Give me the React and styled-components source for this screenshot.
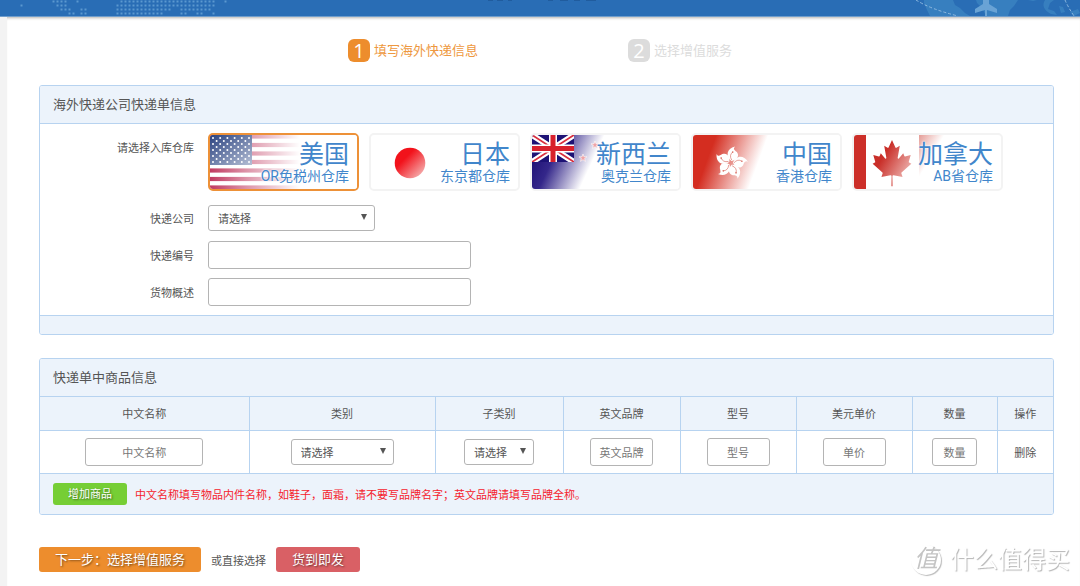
import React, { useState } from 'react';
import styled, { createGlobalStyle } from 'styled-components';

const GlobalStyle = createGlobalStyle`
  * {
    box-sizing: border-box;
  }
  body {
    margin: 0;
    background: #f3f3f3;
    color: #555;
    font-family: 'Noto Sans CJK SC', sans-serif;
    font-size: 11px;
  }
  input, select, button {
    font-family: inherit;
    font-size: inherit;
    color: inherit;
  }
`;

const headingFont = "'Liberation Sans', 'Noto Sans CJK SC', sans-serif";

// Styled Components
const Header = styled.header`
  position: relative;
  display: flex;
  justify-content: space-between;
  height: 17px;
  overflow: hidden;
  background: #296db5;
  border-bottom: 1px solid #6f9dcc;
`;

const Page = styled.div`
  position: relative;
  margin-left: 7px;
  padding: 22px 26px 14px 32px;
  min-height: calc(100vh - 17px);
  background: #fff;
  box-shadow: inset 0 3px 3px -2px rgba(80, 70, 60, 0.4);
`;

const Steps = styled.ol`
  display: flex;
  justify-content: center;
  gap: 150px;
  margin: 0 0 23px;
  padding: 0 13px 0 0;
  list-style: none;
`;

const Step = styled.li`
  display: flex;
  align-items: center;
  gap: 4px;
  font-family: ${headingFont};
  font-size: 13px;
  line-height: 23px;
  color: ${(props) => (props.$active ? '#ee9840' : '#dcdcdc')};
`;

const StepNumber = styled.span`
  width: 22px;
  height: 23px;
  border-radius: 6px;
  background: ${(props) => (props.$active ? '#ed8d2d' : '#dcdcdc')};
  color: #fff;
  font-family: 'Open Sans', sans-serif;
  font-size: 20px;
  line-height: 23px;
  text-align: center;
`;

const Panel = styled.section`
  margin-bottom: 23px;
  border: 1px solid #b7d3f0;
  border-radius: 3px;
  background: #fff;
  overflow: hidden;
`;

const PanelTitle = styled.h2`
  margin: 0;
  padding: 0 13px;
  border-bottom: 1px solid #b7d3f0;
  background: #ecf3fb;
  font-family: ${headingFont};
  font-size: 13px;
  font-weight: 400;
  line-height: 37px;
`;

const PanelFooter = styled.div`
  display: flex;
  align-items: center;
  gap: 8px;
  min-height: 19px;
  padding: ${(props) => (props.$roomy ? '9px 13px' : '0')};
  border-top: 1px solid #b7d3f0;
  background: #ecf3fb;
`;

const FormBody = styled.div`
  display: flex;
  flex-direction: column;
  gap: 9px;
  padding: 9px 0;
`;

const FormRow = styled.div`
  display: flex;
  align-items: ${(props) => (props.$top ? 'flex-start' : 'center')};
  gap: 14px;
  min-height: 28px;
  margin-bottom: ${(props) => (props.$top ? '4px' : '0')};
`;

const FormLabel = styled.label`
  flex: none;
  width: 154px;
  line-height: 28px;
  text-align: right;
`;

const TextInput = styled.input`
  width: ${(props) => props.$width || '100%'};
  max-width: 100%;
  height: 28px;
  padding: 0 2px;
  border: 1px solid #b4b4b4;
  border-radius: 3px;
  background: #fff;
  text-align: ${(props) => (props.$center ? 'center' : 'left')};
  &::placeholder {
    color: #777;
    opacity: 1;
  }
`;

const SelectWrap = styled.span`
  position: relative;
  display: inline-block;
  vertical-align: middle;
  width: ${(props) => props.$width};
  &::after {
    content: '';
    position: absolute;
    top: 9px;
    right: 8px;
    border: 3px solid transparent;
    border-top: 6px solid #555;
    border-bottom: 0;
    pointer-events: none;
  }
`;

const SelectBox = styled.select`
  display: block;
  appearance: none;
  width: 100%;
  height: 26px;
  padding: 0 9px;
  border: 1px solid #b4b4b4;
  border-radius: 3px;
  background: #fff;
`;

const Warehouses = styled.div`
  display: flex;
  flex-wrap: wrap;
  gap: 10px;
`;

const WarehouseCard = styled.label`
  position: relative;
  width: 151px;
  height: 58px;
  padding: 6px 8px;
  border: 2px solid ${(props) => (props.$selected ? '#ed9138' : '#f3f3f3')};
  border-radius: 5px;
  overflow: hidden;
  color: #4186cb;
  text-align: right;
  text-shadow: 0 0 2px #fff, 0 0 2px #fff;
  cursor: pointer;
  input {
    position: absolute;
    opacity: 0;
  }
  svg {
    position: absolute;
    top: 0;
    left: 0;
  }
`;

const Country = styled.span`
  position: relative;
  display: block;
  font-family: ${headingFont};
  font-size: 25px;
  line-height: 26px;
`;

const Depot = styled.span`
  position: relative;
  display: block;
  font-family: Roboto, 'Noto Sans CJK SC', sans-serif;
  font-size: 14px;
  line-height: 18px;
`;

const ItemTable = styled.table`
  width: 100%;
  table-layout: fixed;
  border-collapse: collapse;
  text-align: center;
  th, td {
    padding: 0;
    border-left: 1px solid #b7d3f0;
  }
  th:first-child, td:first-child {
    border-left: 0;
  }
  th {
    height: 33px;
    border-bottom: 1px solid #b7d3f0;
    background: #ecf3fb;
    font-weight: 400;
  }
  td {
    height: 43px;
  }
`;

const RemoveLink = styled.a`
  color: #555;
  text-decoration: none;
`;

const Hint = styled.p`
  margin: 0;
  color: #f5222d;
  line-height: 22px;
`;

const Button = styled.button`
  height: ${(props) => (props.$small ? '22px' : '25px')};
  padding: ${(props) => (props.$small ? '0 15px' : '0 16px')};
  border: 0;
  border-radius: 3px;
  background: ${(props) => props.$color};
  color: #fff;
  font-family: ${headingFont};
  font-size: ${(props) => (props.$small ? '11px' : '13px')};
  line-height: 22px;
  text-shadow: 1px 1px 2px rgba(0, 0, 0, 0.5);
  cursor: pointer;
`;

const Actions = styled.div`
  display: flex;
  align-items: center;
  gap: 10px;
  margin-top: 32px;
`;

const Watermark = styled.div`
  position: fixed;
  right: 10px;
  bottom: 8px;
  display: flex;
  align-items: center;
  gap: 9px;
  color: #fff;
  font-family: ${headingFont};
  font-size: 24px;
  line-height: 36px;
  text-shadow: 1px 1px 1px #b4b4b4;
`;

const Seal = styled.span`
  width: 30px;
  height: 30px;
  border-radius: 50%;
  box-shadow: 1px 1px 1px #bbb;
  color: #c4c4c4;
  font-style: italic;
  font-size: 24px;
  line-height: 28px;
  text-align: center;
  text-shadow: none;
`;

// [x of first dot, y, number of dots]
const dotRuns = [
  [53, 1, 4], [77, 1, 1], [121, 1, 24], [225, 1, 1],
  [21, 5, 1], [57, 5, 3], [117, 5, 25],
  [61, 9, 3], [81, 9, 2], [117, 9, 14], [181, 9, 8],
  [69, 13, 2], [81, 13, 2], [117, 13, 12], [181, 13, 2], [197, 13, 2], [213, 13, 1],
];

function DottedMap() {
  return (
    <svg width="240" height="16" aria-hidden="true">
      {dotRuns.map(([x, y, count]) =>
        Array.from({ length: count }, (_, i) => (
          <rect key={`${x}-${y}-${i}`} x={x + i * 4 - 0.5} y={y - 0.5} width="2" height="2" fill="#5b98cf" />
        ))
      )}
    </svg>
  );
}

function FlightMap() {
  return (
    <svg width="240" height="16" viewBox="-60 0 240 16" aria-hidden="true">
      <path d="M24 0H53L55 5L60 8L65 13L70 16H30L27 10L24 3Z" fill="#377fbf" />
      <path d="M76 0H118L114 6L110 10L108 16H86L82 8L77 3Z" fill="#377fbf" />
      <path d="M145 0Q140 8 151 14L157 15L154 11L148 9L150 3L154 0ZM159 6L163 7L165 12L161 13ZM170 12l8-3 2 4-6 3zM128 0l5 1 4-1z" fill="#377fbf" />
      <path d="M16 0Q30 9 58 16" fill="none" stroke="#8db8df" strokeDasharray="3 2" />
      <path d="M165 0Q168 7 174 16" fill="none" stroke="#8db8df" strokeDasharray="3 2" />
      <path d="M83 0h6v4l8 5v4l-10-3v6h-2v-6l-10 3V9l8-5z" fill="#69a3d5" />
    </svg>
  );
}

function HeaderMarks() {
  return (
    <svg width="120" height="2" aria-hidden="true">
      <path d="M8 0h5M17 0h6M28 0h4M68 0h5M80 0h8M94 0h6M106 0h10" stroke="#205c9e" strokeWidth="2" />
    </svg>
  );
}

function UsaFlag() {
  const stars = [];
  for (let row = 0; row < 9; row++) {
    for (let col = row % 2; col < 11; col += 2) {
      stars.push(<circle key={`${row}-${col}`} cx={3 + col * 3.6} cy={3 + row * 3} r="1" />);
    }
  }
  return (
    <svg width="148" height="54" aria-hidden="true">
      <defs>
        <linearGradient id="usFade" gradientUnits="userSpaceOnUse" x1="0" y1="0" x2="90" y2="0">
          <stop offset="0" stopColor="#fff" stopOpacity="0" />
          <stop offset="0.4" stopColor="#fff" stopOpacity="0.45" />
          <stop offset="1" stopColor="#fff" />
        </linearGradient>
        <linearGradient id="usCanton" x1="0" y1="0" x2="1" y2="1">
          <stop offset="0" stopColor="#2a4280" />
          <stop offset="1" stopColor="#b5bfd5" />
        </linearGradient>
      </defs>
      {[0, 1, 2, 3, 4, 5, 6].map((i) => (
        <rect key={i} y={i * 8.5 - 0.6} width="90" height="4.2" fill="#c03a60" />
      ))}
      <rect width="148" height="54" fill="url(#usFade)" />
      <rect width="42" height="30" fill="url(#usCanton)" />
      <g fill="#fff">{stars}</g>
    </svg>
  );
}

function JapanFlag() {
  return (
    <svg width="148" height="54" aria-hidden="true">
      <defs>
        <linearGradient id="jpSun" x1="0.1" y1="0.1" x2="0.9" y2="0.9">
          <stop offset="0.3" stopColor="#f2121b" />
          <stop offset="1" stopColor="#f5b0b0" />
        </linearGradient>
      </defs>
      <circle cx="39" cy="28" r="15.3" fill="url(#jpSun)" />
    </svg>
  );
}

function NewZealandFlag() {
  const star = 'M0-4L1-1.2H4L1.6.5L2.5 3.4L0 1.7L-2.5 3.4L-1.6.5L-4-1.2H-1Z';
  return (
    <svg width="148" height="54" aria-hidden="true">
      <defs>
        <linearGradient id="nzSea" gradientUnits="userSpaceOnUse" x1="4" y1="12" x2="56" y2="36">
          <stop offset="0" stopColor="#1d0f74" />
          <stop offset="0.35" stopColor="#34278a" />
          <stop offset="1" stopColor="#fff" />
        </linearGradient>
        <clipPath id="nzJack">
          <rect width="42" height="27" />
        </clipPath>
      </defs>
      <rect width="148" height="54" fill="url(#nzSea)" />
      <g clipPath="url(#nzJack)">
        <rect width="42" height="27" fill="#1d1275" />
        <path d="M0 0L42 27M42 0L0 27" stroke="#fff" strokeWidth="6" />
        <path d="M0 0L42 27M42 0L0 27" stroke="#d9303f" strokeWidth="1.8" />
        <path d="M21 0V27M0 13.5H42" stroke="#fff" strokeWidth="8" />
        <path d="M21 0V27M0 13.5H42" stroke="#d8202c" strokeWidth="5" />
      </g>
      <g fill="#efa3a6" stroke="#fff" strokeWidth="0.6">
        <path d={star} transform="translate(51 23)" />
        <path d={star} transform="translate(63 10)" />
      </g>
    </svg>
  );
}

function HongKongFlag() {
  return (
    <svg width="148" height="54" aria-hidden="true">
      <defs>
        <linearGradient id="hkRed" gradientUnits="userSpaceOnUse" x1="18" y1="14" x2="64" y2="31">
          <stop offset="0" stopColor="#d42d20" />
          <stop offset="1" stopColor="#fff" />
        </linearGradient>
      </defs>
      <rect width="148" height="54" fill="url(#hkRed)" />
      <g transform="translate(38 28)">
        {[14, 86, 158, 230, 302].map((angle) => (
          <g key={angle} transform={`rotate(${angle})`}>
            <path d="M0-2C-7-5-8-13 0-17C-2-14 1-13 3-12C7-9 5-4 0-2Z" fill="#fff" />
            <path d="M0-3Q-4-7-1-11" fill="none" stroke="#d86d62" strokeWidth="0.6" />
            <circle cx="-1" cy="-11" r="0.8" fill="#d86d62" />
          </g>
        ))}
      </g>
    </svg>
  );
}

function CanadaFlag() {
  return (
    <svg width="148" height="54" aria-hidden="true">
      <defs>
        <linearGradient id="caLeaf" x1="0" y1="0" x2="1" y2="0.7">
          <stop offset="0.35" stopColor="#c92f29" />
          <stop offset="1" stopColor="#efb9b5" />
        </linearGradient>
        <linearGradient id="caBar" gradientUnits="userSpaceOnUse" x1="62" y1="2" x2="82" y2="14">
          <stop offset="0" stopColor="#e3958f" />
          <stop offset="1" stopColor="#fff" />
        </linearGradient>
      </defs>
      <rect width="12" height="54" fill="#cc2f29" />
      <rect x="65" width="36" height="54" fill="url(#caBar)" />
      <path
        transform="translate(38 28) scale(0.0104 0.0115)"
        fill="url(#caLeaf)"
        d="M-90 2030l45-863a95 95 0 0 0-111-98l-859 151 116-320a65 65 0 0 0-20-73l-941-762 212-99a65 65 0 0 0 34-79l-186-572 542 115a65 65 0 0 0 73-38l105-247 423 454a65 65 0 0 0 111-57l-204-1052 327 189a65 65 0 0 0 91-27l332-652 332 652a65 65 0 0 0 91 27l327-189-204 1052a65 65 0 0 0 111 57l423-454 105 247a65 65 0 0 0 73 38l542-115-186 572a65 65 0 0 0 34 79l212 99-941 762a65 65 0 0 0-20 73l116 320-859-151a95 95 0 0 0-111 98l45 863z"
      />
    </svg>
  );
}

const warehouses = [
  { id: 'us', country: '美国', depot: 'OR免税州仓库', Flag: UsaFlag },
  { id: 'jp', country: '日本', depot: '东京都仓库', Flag: JapanFlag },
  { id: 'nz', country: '新西兰', depot: '奥克兰仓库', Flag: NewZealandFlag },
  { id: 'hk', country: '中国', depot: '香港仓库', Flag: HongKongFlag },
  { id: 'ca', country: '加拿大', depot: 'AB省仓库', Flag: CanadaFlag },
];

const columns = [
  { title: '中文名称', width: 209, input: '中文名称', size: '118px' },
  { title: '类别', width: 186, select: true, size: '103px' },
  { title: '子类别', width: 128, select: true, size: '70px' },
  { title: '英文品牌', width: 117, input: '英文品牌', size: '63px' },
  { title: '型号', width: 116, input: '型号', size: '63px' },
  { title: '美元单价', width: 116, input: '单价', size: '63px' },
  { title: '数量', width: 85, input: '数量', size: '45px' },
  { title: '操作', width: 56 },
];

function Select({ width, ...rest }) {
  return (
    <SelectWrap $width={width}>
      <SelectBox {...rest}>
        <option>请选择</option>
      </SelectBox>
    </SelectWrap>
  );
}

function ItemCell({ column, onRemove }) {
  if (column.select) {
    return <Select width={column.size} aria-label={column.title} />;
  }
  if (column.input) {
    return <TextInput $center $width={column.size} placeholder={column.input} aria-label={column.title} />;
  }
  return (
    <RemoveLink href="#" onClick={onRemove}>
      删除
    </RemoveLink>
  );
}

function App() {
  const [warehouse, setWarehouse] = useState('us');
  const [items, setItems] = useState([1]);

  const addItem = () => setItems([...items, Date.now()]);

  const removeItem = (event, id) => {
    event.preventDefault();
    setItems(items.filter((item) => item !== id));
  };

  return (
    <>
      <GlobalStyle />
      <Header>
        <DottedMap />
        <HeaderMarks />
        <FlightMap />
      </Header>
      <Page>
        <Steps>
          <Step $active>
            <StepNumber $active>1</StepNumber>
            填写海外快递信息
          </Step>
          <Step>
            <StepNumber>2</StepNumber>
            选择增值服务
          </Step>
        </Steps>

        <Panel>
          <PanelTitle>海外快递公司快递单信息</PanelTitle>
          <FormBody>
            <FormRow $top>
              <FormLabel as="span" id="warehouse-label">请选择入库仓库</FormLabel>
              <Warehouses role="radiogroup" aria-labelledby="warehouse-label">
                {warehouses.map(({ id, country, depot, Flag }) => (
                  <WarehouseCard key={id} $selected={warehouse === id}>
                    <input
                      type="radio"
                      name="warehouse"
                      checked={warehouse === id}
                      onChange={() => setWarehouse(id)}
                    />
                    <Flag />
                    <Country>{country}</Country>
                    <Depot>{depot}</Depot>
                  </WarehouseCard>
                ))}
              </Warehouses>
            </FormRow>
            <FormRow>
              <FormLabel htmlFor="company">快递公司</FormLabel>
              <Select id="company" width="167px" />
            </FormRow>
            <FormRow>
              <FormLabel htmlFor="tracking">快递编号</FormLabel>
              <TextInput id="tracking" type="text" $width="263px" />
            </FormRow>
            <FormRow>
              <FormLabel htmlFor="summary">货物概述</FormLabel>
              <TextInput id="summary" type="text" $width="263px" />
            </FormRow>
          </FormBody>
          <PanelFooter />
        </Panel>

        <Panel>
          <PanelTitle>快递单中商品信息</PanelTitle>
          <ItemTable>
            <colgroup>
              {columns.map((column) => (
                <col key={column.title} width={column.width} />
              ))}
            </colgroup>
            <thead>
              <tr>
                {columns.map((column) => (
                  <th key={column.title}>{column.title}</th>
                ))}
              </tr>
            </thead>
            <tbody>
              {items.map((id) => (
                <tr key={id}>
                  {columns.map((column) => (
                    <td key={column.title}>
                      <ItemCell column={column} onRemove={(event) => removeItem(event, id)} />
                    </td>
                  ))}
                </tr>
              ))}
            </tbody>
          </ItemTable>
          <PanelFooter $roomy>
            <Button type="button" $small $color="#76ce35" onClick={addItem}>增加商品</Button>
            <Hint>中文名称填写物品内件名称，如鞋子，面霜，请不要写品牌名字；英文品牌请填写品牌全称。</Hint>
          </PanelFooter>
        </Panel>

        <Actions>
          <Button type="button" $color="#ed8d2d">下一步：选择增值服务</Button>
          <span>或直接选择</span>
          <Button type="button" $color="#d96065">货到即发</Button>
        </Actions>
      </Page>
      <Watermark>
        <Seal>值</Seal>
        <span>什么值得买</span>
      </Watermark>
    </>
  );
}

export default App;
